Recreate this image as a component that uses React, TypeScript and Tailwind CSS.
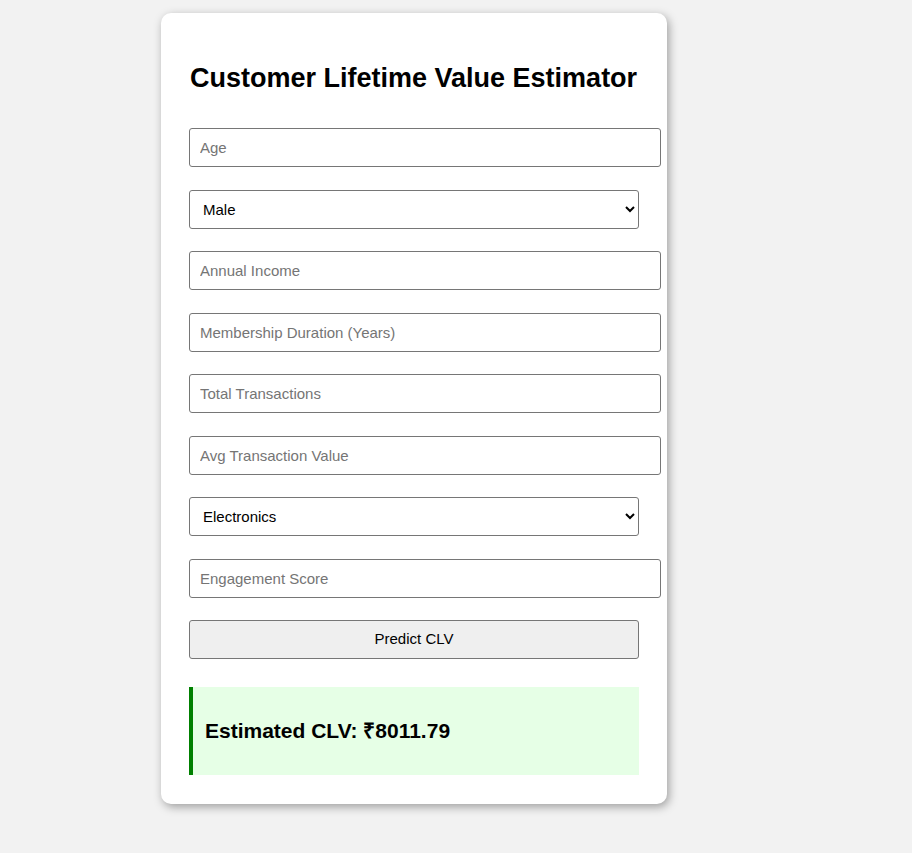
import { useState } from 'react'

const inputCls =
  'box-border h-[39px] w-[472px] shrink-0 rounded-[3px] border border-[#767676] bg-white px-[10px] text-[15px] text-black outline-none placeholder:text-[#757575]'
const selectCls =
  'box-border h-[39px] w-[450px] shrink-0 rounded-[3px] border border-[#767676] bg-white pl-[9px] pr-[6px] text-[15px] text-black outline-none'

export default function App() {
  const [gender, setGender] = useState('Male')
  const [category, setCategory] = useState('Electronics')

  return (
    <div className="min-h-screen bg-[#f2f2f2] pt-[13px] pb-[40px] font-['Liberation_Sans',Arial,sans-serif]">
      <div className="ml-[161px] w-[506px] rounded-[10px] bg-white px-[28px] pt-[50px] pb-[29px] shadow-[2px_3px_10px_rgba(0,0,0,0.35)]">
        <h2 className="mb-[34px] ml-[1px] text-[27px] leading-[31px] font-bold text-black">
          Customer Lifetime Value Estimator
        </h2>

        <div className="flex flex-col gap-[22.5px]">
          <input className={inputCls} placeholder="Age" />
          <select className={selectCls} value={gender} onChange={(e) => setGender(e.target.value)}>
            <option>Male</option>
            <option>Female</option>
          </select>
          <input className={inputCls} placeholder="Annual Income" />
          <input className={inputCls} placeholder="Membership Duration (Years)" />
          <input className={inputCls} placeholder="Total Transactions" />
          <input className={inputCls} placeholder="Avg Transaction Value" />
          <select className={selectCls} value={category} onChange={(e) => setCategory(e.target.value)}>
            <option>Electronics</option>
            <option>Clothing</option>
            <option>Groceries</option>
            <option>Home</option>
          </select>
          <input className={inputCls} placeholder="Engagement Score" />
          <button className="h-[39px] w-[450px] rounded-[3px] border border-[#767676] bg-[#efefef] text-[15px] text-black">
            Predict CLV
          </button>
        </div>

        <div className="mt-[28px] flex h-[88px] w-[450px] items-center border-l-4 border-[#008000] bg-[#e6ffe6] pl-[12px]">
          <h3 className="text-[21px] font-bold text-black">Estimated CLV: ₹8011.79</h3>
        </div>
      </div>
    </div>
  )
}
